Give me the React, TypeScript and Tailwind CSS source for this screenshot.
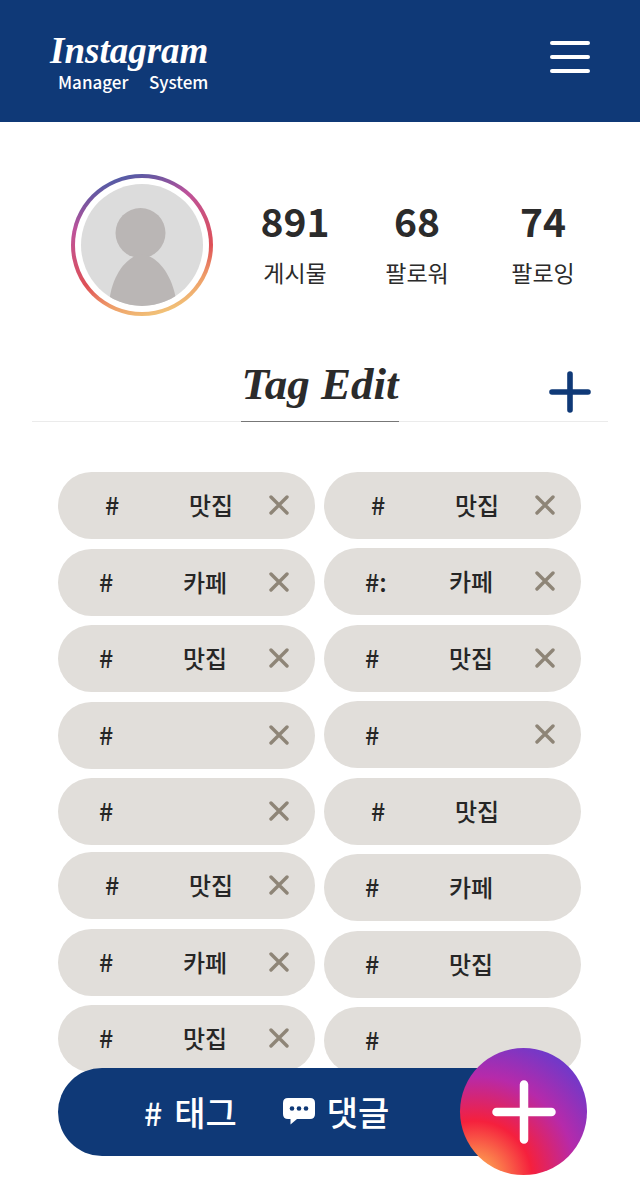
import React from "react";

type Tag = { word?: string; inset?: boolean; removable?: boolean; mark?: string };

const leftTop: Tag[] = [
  { word: "맛집", inset: true, removable: true },
  { word: "카페", removable: true },
  { word: "맛집", removable: true },
  { removable: true },
  { removable: true },
];
const leftBottom: Tag[] = [
  { word: "맛집", inset: true, removable: true },
  { word: "카페", removable: true },
  { word: "맛집", removable: true },
];
const right: Tag[] = [
  { word: "맛집", inset: true, removable: true },
  { word: "카페", mark: "#:", removable: true },
  { word: "맛집", removable: true },
  { removable: true },
  { word: "맛집", inset: true },
  { word: "카페" },
  { word: "맛집" },
  {},
];

const stats = [
  { value: "891", label: "게시물", width: "w-[120px]" },
  { value: "68", label: "팔로워", width: "w-[124px]" },
  { value: "74", label: "팔로잉", width: "w-[128px]" },
];

function TagPill({ tag }: { tag: Tag }) {
  return (
    <li
      className={`flex h-[67px] items-center rounded-full bg-[#e1deda] pr-[26px] pb-px text-2xl font-medium text-[#262626] ${
        tag.inset ? "pl-[47px]" : "pl-[41px]"
      }`}
    >
      <span className="w-[84px] shrink-0 text-[25px]">{tag.mark ?? "#"}</span>
      <span>{tag.word}</span>
      {tag.removable && (
        <button type="button" aria-label="태그 삭제" className="ml-auto">
          <svg viewBox="0 0 20 20" className="size-5" fill="none" stroke="#8e8577" strokeWidth="3.4" strokeLinecap="round">
            <path d="M2 2 18 18M18 2 2 18" />
          </svg>
        </button>
      )}
    </li>
  );
}

function Avatar() {
  return (
    <div className="size-[142px] shrink-0 rounded-full bg-[linear-gradient(162deg,#4060aa_6%,#7456a0_17%,#bd529b_30%,#de5056_62%,#ee9b68_77%,#f2cc7c_93%)] p-1">
      <div className="size-full rounded-full bg-white p-1.5">
        <svg viewBox="0 0 122 122" className="size-full rounded-full bg-[#dcdcdc]" fill="#bab6b5">
          <circle cx="59.500" cy="49" r="25" />
          <path d="M28 122C29 98 40 79 54 72Q61 69 68 72C82 79 93 96 96 122Z" />
        </svg>
      </div>
    </div>
  );
}

export default function App() {
  return (
    <div className="min-h-screen bg-white font-['Noto_Sans_CJK_KR',sans-serif] text-[#2b2b2b]">
      <header className="flex h-[122px] items-start justify-between bg-[#0f3977] px-[50px] text-white">
        <a href="#home" className="flex flex-col pt-[30px]">
          <span className="font-['Liberation_Serif',serif] text-[37px] leading-[42px] font-bold italic">Instagram</span>
          <span className="flex justify-between pl-2 text-[17px] leading-5 font-medium">
            <span>Manager</span>
            <span>System</span>
          </span>
        </a>
        <button type="button" aria-label="메뉴" className="mt-[41px]">
          <svg viewBox="0 0 40 32" className="h-8 w-10" fill="white">
            <rect width="40" height="4" rx="2" />
            <rect y="14" width="40" height="4" rx="2" />
            <rect y="28" width="40" height="4" rx="2" />
          </svg>
        </button>
      </header>

      <section className="flex items-center pt-[52px] pr-[32px] pl-[71px]">
        <Avatar />
        <dl className="ml-[22px] flex pb-[3px]">
          {stats.map((s) => (
            <div key={s.label} className={`flex flex-col-reverse items-center ${s.width}`}>
              <dt className="mt-4 text-[23px] leading-8">{s.label}</dt>
              <dd className="text-[39px] leading-10 font-bold">{s.value}</dd>
            </div>
          ))}
        </dl>
      </section>

      <main className="pb-[126px]">
        <div className="mx-8 mt-9 grid h-[70px] grid-cols-[1fr_158px_1fr] border-b border-[#ebebeb]">
          <h1 className="col-start-2 -mb-px border-b border-[#777] text-center font-['Liberation_Serif',serif] text-[45px] leading-[64px] font-bold whitespace-nowrap italic">
            Tag Edit
          </h1>
          <button type="button" aria-label="태그 추가" className="mt-[19px] mr-[17px] self-start justify-self-end">
            <svg viewBox="0 0 42 42" className="size-[42px]" stroke="#0f3977" strokeWidth="5.600" strokeLinecap="round">
              <path d="M21 3V39M3 21H39" />
            </svg>
          </button>
        </div>

        <div className="mr-[59px] ml-[58px] grid grid-cols-2 gap-[9px] pt-[50px]">
          <div className="flex flex-col gap-[7px]">
            <ul className="flex h-[373px] flex-col justify-between">
              {leftTop.map((t, i) => (
                <TagPill key={i} tag={t} />
              ))}
            </ul>
            <ul className="flex h-[220px] flex-col justify-between">
              {leftBottom.map((t, i) => (
                <TagPill key={i} tag={t} />
              ))}
            </ul>
          </div>
          <ul className="flex h-[602px] flex-col justify-between">
            {right.map((t, i) => (
              <TagPill key={i} tag={t} />
            ))}
          </ul>
        </div>
      </main>

      <div className="fixed right-[53px] bottom-[25px] left-[58px] flex h-[127px] items-center">
        <nav className="mr-[19px] flex h-[88px] flex-1 items-center rounded-full bg-[#0f3977] pl-[86px] text-[34px] leading-none font-medium text-white">
          <a href="#tags" className="flex items-center gap-3">
            <span className="text-[32px]">#</span>
            <span>태그</span>
          </a>
          <a href="#comments" className="ml-[46px] flex items-center gap-3">
            <svg viewBox="0 0 32 27" className="h-[27px] w-8" fill="white">
              <path d="M5 0H27Q32 0 32 5V16Q32 21 27 21H14L7.500 26.500V21H5Q0 21 0 16V5Q0 0 5 0Z" />
              <g fill="#0f3977">
                <circle cx="9" cy="10.500" r="2.300" />
                <circle cx="16" cy="10.500" r="2.300" />
                <circle cx="23" cy="10.500" r="2.300" />
              </g>
            </svg>
            <span>댓글</span>
          </a>
        </nav>
        <button
          type="button"
          aria-label="새로 만들기"
          className="absolute right-0 flex size-[127px] items-center justify-center rounded-full bg-[radial-gradient(circle_at_15px_130px,#fdaa55_0px,#fd9850_16px,#f5203d_57px,#b62aaa_102px,#6b3acb_148px)]"
        >
          <svg viewBox="0 0 64 64" className="size-16" stroke="white" strokeWidth="8.500" strokeLinecap="round">
            <path d="M32 4.500V59.500M4.500 32H59.500" />
          </svg>
        </button>
      </div>
    </div>
  );
}
